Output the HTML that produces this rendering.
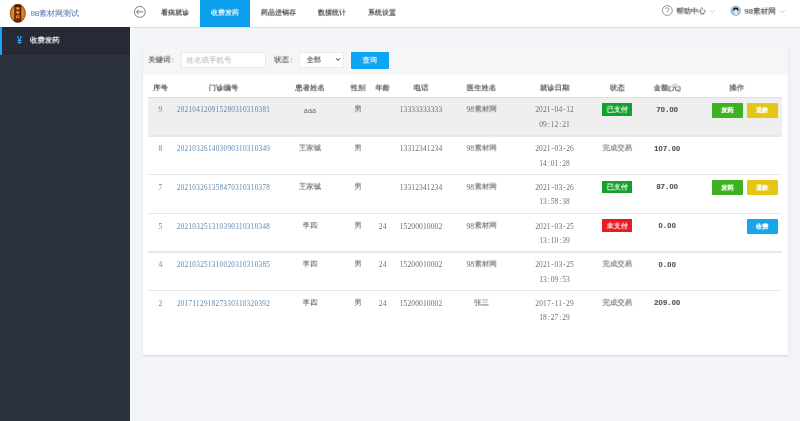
<!DOCTYPE html><html><head><meta charset="utf-8"><style>
*{margin:0;padding:0;box-sizing:border-box}
html,body{width:800px;height:421px;overflow:hidden;background:#f3f4f7;font-family:"Liberation Sans",sans-serif}
#root{position:absolute;left:0;top:0;width:800px;height:421px;will-change:transform;overflow:hidden}
.r{position:absolute}
.s{position:absolute}
.t{position:absolute;white-space:nowrap;will-change:transform;font-size:8px;line-height:11px}
.d{position:absolute;white-space:nowrap;line-height:10px}
.d i{font-style:normal;display:inline-block;text-align:center}
</style></head><body><div id="root">
<div class="r" style="left:0.00px;top:0.00px;width:800.00px;height:26.50px;background:#fff;box-shadow:0 0.8px 1px rgba(0,0,0,0.09)"></div>
<svg class="s" style="left:9px;top:3px" width="18" height="21" viewBox="0 0 18 21">
<defs><radialGradient id="lg" cx="50%" cy="50%" r="55%"><stop offset="0%" stop-color="#e8a838"/><stop offset="65%" stop-color="#d48a22"/><stop offset="100%" stop-color="#a8561a"/></radialGradient>
<clipPath id="lc"><ellipse cx="8.8" cy="10.3" rx="7.9" ry="9.3"/></clipPath></defs>
<ellipse cx="8.8" cy="10.3" rx="7.9" ry="9.3" fill="url(#lg)"/>
<g clip-path="url(#lc)">
<rect x="5.3" y="0" width="7" height="21" fill="#4a1608"/>
<rect x="6.2" y="3.6" width="5.2" height="14" fill="#8a2a10"/>
<path d="M7.2 4.6 h3.2 v1.1 h-1.1 v1.4 h-1 v-1.4 h-1.1z" fill="#f2b83a"/>
<path d="M7.1 8.6 q1.8 -0.9 3.4 0.2 q-0.4 1.9 -1.8 1.9 q-1.4 -0.2 -1.6 -2.1z" fill="#f2b83a"/>
<path d="M7.3 12.4 h3 v2.6 h-3z M8.1 13.1 v1.2 h1.4 v-1.2z" fill="#f2b83a" fill-rule="evenodd"/>
</g>
<ellipse cx="8.8" cy="10.3" rx="7.6" ry="9.0" fill="none" stroke="#a04a16" stroke-width="0.7" opacity="0.8"/>
</svg>
<div class="t" style="left:30px;top:8px;color:#5a80ab;-webkit-text-stroke-width:0.050px;transform:translate(0.400px,0.100px) scale(1.0000);transform-origin:0 0;">98素材网测试</div>
<svg class="s" style="left:133px;top:5px" width="14" height="14" viewBox="0 0 14 14">
<circle cx="6.8" cy="6.9" r="5.45" fill="none" stroke="#707070" stroke-width="0.9"/>
<path d="M3.5 6.9 L5.7 4.7 M3.5 6.9 L5.7 9.1 M3.8 6.9 H10.2" stroke="#707070" stroke-width="0.95" fill="none"/>
</svg>
<div class="t" style="left:175px;top:7px;color:#333;-webkit-text-stroke-width:0.171px;transform:translate(0.000px,0.787px) translateX(-50%) scale(0.8750);transform-origin:50% 0;">看病就诊</div>
<div class="r" style="left:200.00px;top:0.00px;width:50.00px;height:26.50px;background:#0b9feb;"></div>
<div class="t" style="left:225px;top:7px;color:#fff;-webkit-text-stroke-width:0.171px;transform:translate(0.000px,0.787px) translateX(-50%) scale(0.8750);transform-origin:50% 0;">收费发药</div>
<div class="t" style="left:278px;top:7px;color:#333;-webkit-text-stroke-width:0.171px;transform:translate(0.500px,0.787px) translateX(-50%) scale(0.8750);transform-origin:50% 0;">药品进销存</div>
<div class="t" style="left:332px;top:7px;color:#333;-webkit-text-stroke-width:0.171px;transform:translate(0.000px,0.787px) translateX(-50%) scale(0.8750);transform-origin:50% 0;">数据统计</div>
<div class="t" style="left:382px;top:7px;color:#333;-webkit-text-stroke-width:0.171px;transform:translate(0.000px,0.787px) translateX(-50%) scale(0.8750);transform-origin:50% 0;">系统设置</div>
<svg class="s" style="left:661px;top:5px" width="12" height="12" viewBox="0 0 12 12">
<circle cx="6.3" cy="5.55" r="4.95" fill="none" stroke="#7a7a7a" stroke-width="0.8"/>
<path d="M4.2 4.0 Q5.2 2.6 6.6 2.9 Q8.1 3.3 7.8 4.6 L5.7 7.6" stroke="#7a7a7a" stroke-width="0.85" fill="none"/>
</svg>
<div class="t" style="left:676px;top:6px;color:#484848;-webkit-text-stroke-width:0.130px;transform:translate(0.200px,0.012px) scale(0.9250);transform-origin:0 0;">帮助中心</div>
<svg class="s" style="left:709px;top:8.5px" width="7" height="5" viewBox="0 0 7 5"><path d="M0.8 1 L3.4 3.6 L6 1" stroke="#bbb" stroke-width="0.7" fill="none"/></svg>
<svg class="s" style="left:729.5px;top:4.8px" width="11.5" height="11.5" viewBox="0 0 12 12">
<defs><clipPath id="av"><circle cx="6" cy="6" r="5.5"/></clipPath><linearGradient id="avg" x1="0" x2="1" y1="0" y2="0"><stop offset="0" stop-color="#8fc4e6"/><stop offset="1" stop-color="#b2c2cf"/></linearGradient></defs>
<g clip-path="url(#av)"><rect width="12" height="12" fill="url(#avg)"/>
<ellipse cx="6.1" cy="4.6" rx="2.7" ry="1.9" fill="#1c232c"/>
<ellipse cx="6.1" cy="7.6" rx="1.9" ry="3.1" fill="#ede6e6"/>
<rect x="5.2" y="9.8" width="1.8" height="2.4" fill="#e2b4ac"/>
<path d="M3.6 4.8 Q6.1 3.3 8.6 4.8 L8.4 3.6 Q6.1 2.2 3.8 3.6 Z" fill="#1c232c"/>
</g></svg>
<div class="t" style="left:744px;top:6px;color:#484848;-webkit-text-stroke-width:0.126px;transform:translate(0.400px,0.075px) scale(0.9500);transform-origin:0 0;">98素材网</div>
<svg class="s" style="left:778.5px;top:8.5px" width="7" height="5" viewBox="0 0 7 5"><path d="M0.8 1 L3.4 3.6 L6 1" stroke="#bbb" stroke-width="0.7" fill="none"/></svg>
<div class="r" style="left:0.00px;top:26.50px;width:130.00px;height:395.00px;background:#2c323d;"></div>
<div class="r" style="left:0.00px;top:27.00px;width:130.00px;height:28.00px;background:#252a34;"></div>
<div class="r" style="left:0.00px;top:27.00px;width:2.00px;height:28.00px;background:#1ba4f6;"></div>
<div class="d" style="left:17.2px;top:34.7px;font-size:10.5px;line-height:10px;color:#2fa4f2;font-weight:bold;transform:scaleX(0.85);transform-origin:0 0">¥</div>
<div class="t" style="left:30px;top:35px;color:#f6f6f6;-webkit-text-stroke-width:0.216px;transform:translate(0.000px,0.113px) scale(0.9250);transform-origin:0 0;">收费发药</div>
<div class="r" style="left:130.00px;top:26.50px;width:3.00px;height:395.00px;background:#f3f7fc;"></div>
<div class="r" style="left:142.50px;top:45.50px;width:645.50px;height:309.30px;background:#fff;box-shadow:0 0.7px 1.8px rgba(0,0,0,0.14)"></div>
<div class="r" style="left:142.50px;top:46.00px;width:645.50px;height:28.50px;background:#f5f6f8;"></div>
<div class="t" style="left:148px;top:54px;color:#555;-webkit-text-stroke-width:0.128px;transform:translate(0.000px,0.644px) scale(0.9375);transform-origin:0 0;">关键词<span style="margin-left:1.3px">:</span></div>
<div class="r" style="left:180.50px;top:52.00px;width:85.50px;height:16.20px;background:#fff;border:1px solid #e8eaee;border-radius:1px"></div>
<div class="t" style="left:186px;top:55px;color:#b8b8b8;-webkit-text-stroke-width:0.043px;transform:translate(0.500px,0.044px) scale(0.9375);transform-origin:0 0;">姓名或手机号</div>
<div class="t" style="left:274px;top:54px;color:#555;-webkit-text-stroke-width:0.128px;transform:translate(0.000px,0.644px) scale(0.9375);transform-origin:0 0;">状态<span style="margin-left:1.3px">:</span></div>
<div class="r" style="left:299.20px;top:52.00px;width:44.80px;height:16.20px;background:#fff;border:1px solid #e8eaee;border-radius:1px"></div>
<div class="t" style="left:306px;top:54px;color:#4a4a4a;-webkit-text-stroke-width:0.111px;transform:translate(0.600px,0.850px) scale(0.9000);transform-origin:0 0;">全部</div>
<svg class="s" style="left:334.5px;top:57px" width="6" height="5" viewBox="0 0 6 5"><path d="M0.9 1.3 L3 3.3 L5.1 1.3" stroke="#333" stroke-width="1" fill="none"/></svg>
<div class="r" style="left:351.00px;top:52.00px;width:37.50px;height:16.50px;background:#0ea5f2;border-radius:1px"></div>
<div class="t" style="left:369px;top:55px;color:#fff;-webkit-text-stroke-width:0.111px;transform:translate(0.700px,0.250px) translateX(-50%) scale(0.9000);transform-origin:50% 0;">查询</div>
<div class="t" style="left:160px;top:82px;color:#444;-webkit-text-stroke-width:0.162px;transform:translate(0.500px,0.812px) translateX(-50%) scale(0.9250);transform-origin:50% 0;">序号</div>
<div class="t" style="left:223px;top:82px;color:#444;-webkit-text-stroke-width:0.162px;transform:translate(0.500px,0.812px) translateX(-50%) scale(0.9250);transform-origin:50% 0;">门诊编号</div>
<div class="t" style="left:310px;top:82px;color:#444;-webkit-text-stroke-width:0.162px;transform:translate(0.000px,0.812px) translateX(-50%) scale(0.9250);transform-origin:50% 0;">患者姓名</div>
<div class="t" style="left:358px;top:82px;color:#444;-webkit-text-stroke-width:0.162px;transform:translate(0.000px,0.812px) translateX(-50%) scale(0.9250);transform-origin:50% 0;">性别</div>
<div class="t" style="left:382px;top:82px;color:#444;-webkit-text-stroke-width:0.162px;transform:translate(0.700px,0.812px) translateX(-50%) scale(0.9250);transform-origin:50% 0;">年龄</div>
<div class="t" style="left:421px;top:82px;color:#444;-webkit-text-stroke-width:0.162px;transform:translate(0.000px,0.812px) translateX(-50%) scale(0.9250);transform-origin:50% 0;">电话</div>
<div class="t" style="left:481px;top:82px;color:#444;-webkit-text-stroke-width:0.162px;transform:translate(0.500px,0.812px) translateX(-50%) scale(0.9250);transform-origin:50% 0;">医生姓名</div>
<div class="t" style="left:554px;top:82px;color:#444;-webkit-text-stroke-width:0.162px;transform:translate(0.600px,0.812px) translateX(-50%) scale(0.9250);transform-origin:50% 0;">就诊日期</div>
<div class="t" style="left:617px;top:82px;color:#444;-webkit-text-stroke-width:0.162px;transform:translate(0.300px,0.812px) translateX(-50%) scale(0.9250);transform-origin:50% 0;">状态</div>
<div class="t" style="left:667px;top:82px;color:#444;-webkit-text-stroke-width:0.162px;transform:translate(0.200px,0.812px) translateX(-50%) scale(0.9250);transform-origin:50% 0;">金额(元)</div>
<div class="t" style="left:736px;top:82px;color:#444;-webkit-text-stroke-width:0.162px;transform:translate(0.700px,0.812px) translateX(-50%) scale(0.9250);transform-origin:50% 0;">操作</div>
<div class="r" style="left:147.50px;top:96.50px;width:634.50px;height:1.40px;background:#e0e0e0;"></div>
<div class="r" style="left:147.50px;top:97.90px;width:634.50px;height:37.60px;background:#efefef;"></div>
<div class="d" style="left:160.50px;top:105.25px;font-family:'Liberation Serif',serif;font-size:7.5px;color:#808080;transform:translateX(-50%);letter-spacing:0.125px;">9</div>
<div class="d" style="left:223.50px;top:105.25px;font-family:'Liberation Serif',serif;font-size:7.2px;color:#5a88b0;transform:translateX(-50%);letter-spacing:0.3px;">202104120915280310310381</div>
<div class="d" style="left:310.00px;top:105.70px;font-family:'Liberation Sans',sans-serif;font-size:7.3px;color:#6a6a6a;transform:translateX(-50%);letter-spacing:0.125px;">aaa</div>
<div class="t" style="left:358px;top:103px;color:#626262;-webkit-text-stroke-width:0.065px;transform:translate(0.000px,0.912px) translateX(-50%) scale(0.9250);transform-origin:50% 0;">男</div>
<div class="d" style="left:421.00px;top:105.25px;font-family:'Liberation Serif',serif;font-size:7.5px;color:#6e6e6e;transform:translateX(-50%);letter-spacing:0.125px;">13333333333</div>
<div class="t" style="left:485px;top:103px;color:#626262;-webkit-text-stroke-width:0.065px;transform:translate(0.600px,0.912px) translateX(-50%) scale(0.9250);transform-origin:50% 0;">素材网</div>
<div class="d" style="left:470.30px;top:105.25px;font-family:'Liberation Serif',serif;font-size:7.5px;color:#666;transform:translateX(-50%);letter-spacing:0.125px;">98</div>
<div class="d" style="left:554.60px;top:105.25px;font-family:'Liberation Serif',serif;font-size:7.5px;color:#6e6e6e;transform:translateX(-50%);letter-spacing:0.125px;">2021<i style="width:3.875px">-</i>04<i style="width:3.875px">-</i>12</div>
<div class="d" style="left:554.60px;top:119.85px;font-family:'Liberation Serif',serif;font-size:7.5px;color:#6e6e6e;transform:translateX(-50%);letter-spacing:0.125px;">09<i style="width:3.78px">:</i>12<i style="width:3.78px">:</i>21</div>
<div class="r" style="left:602.30px;top:103.00px;width:30.00px;height:12.60px;background:#14a12b;"></div>
<div class="t" style="left:617px;top:104px;color:#fff;-webkit-text-stroke-width:0.169px;transform:translate(0.300px,0.719px) translateX(-50%) scale(0.8875);transform-origin:50% 0;">已支付</div>
<div class="d" style="left:667.20px;top:104.80px;font-family:'Liberation Sans',sans-serif;font-size:7.4px;color:#505050;transform:translateX(-50%);font-weight:bold;-webkit-text-stroke:0.15px #505050;"><i style="width:4.35px">7</i><i style="width:4.35px">0</i><i style="width:4.35px">.</i><i style="width:4.35px">0</i><i style="width:4.35px">0</i></div>
<div class="r" style="left:712.00px;top:102.80px;width:30.75px;height:14.90px;background:#3cb222;border-radius:1px"></div>
<div class="t" style="left:727px;top:105px;color:#fff;-webkit-text-stroke-width:0.452px;transform:translate(0.400px,0.938px) translateX(-50%) scale(0.7750);transform-origin:50% 0;">发药</div>
<div class="r" style="left:746.80px;top:102.80px;width:30.75px;height:14.90px;background:#e5c614;border-radius:1px"></div>
<div class="t" style="left:762px;top:105px;color:#fff;-webkit-text-stroke-width:0.452px;transform:translate(0.200px,0.938px) translateX(-50%) scale(0.7750);transform-origin:50% 0;">退款</div>
<div class="r" style="left:147.50px;top:135.45px;width:634.50px;height:1.30px;background:#e8e8e8;"></div>
<div class="d" style="left:160.50px;top:144.15px;font-family:'Liberation Serif',serif;font-size:7.5px;color:#808080;transform:translateX(-50%);letter-spacing:0.125px;">8</div>
<div class="d" style="left:223.50px;top:144.15px;font-family:'Liberation Serif',serif;font-size:7.2px;color:#5a88b0;transform:translateX(-50%);letter-spacing:0.3px;">202103261403090310310349</div>
<div class="t" style="left:310px;top:142px;color:#626262;-webkit-text-stroke-width:0.065px;transform:translate(0.000px,0.812px) translateX(-50%) scale(0.9250);transform-origin:50% 0;">王家铖</div>
<div class="t" style="left:358px;top:142px;color:#626262;-webkit-text-stroke-width:0.065px;transform:translate(0.000px,0.812px) translateX(-50%) scale(0.9250);transform-origin:50% 0;">男</div>
<div class="d" style="left:421.00px;top:144.15px;font-family:'Liberation Serif',serif;font-size:7.5px;color:#6e6e6e;transform:translateX(-50%);letter-spacing:0.125px;">13312341234</div>
<div class="t" style="left:485px;top:142px;color:#626262;-webkit-text-stroke-width:0.065px;transform:translate(0.600px,0.812px) translateX(-50%) scale(0.9250);transform-origin:50% 0;">素材网</div>
<div class="d" style="left:470.30px;top:144.15px;font-family:'Liberation Serif',serif;font-size:7.5px;color:#666;transform:translateX(-50%);letter-spacing:0.125px;">98</div>
<div class="d" style="left:554.60px;top:144.15px;font-family:'Liberation Serif',serif;font-size:7.5px;color:#6e6e6e;transform:translateX(-50%);letter-spacing:0.125px;">2021<i style="width:3.875px">-</i>03<i style="width:3.875px">-</i>26</div>
<div class="d" style="left:554.60px;top:158.75px;font-family:'Liberation Serif',serif;font-size:7.5px;color:#6e6e6e;transform:translateX(-50%);letter-spacing:0.125px;">14<i style="width:3.78px">:</i>01<i style="width:3.78px">:</i>28</div>
<div class="t" style="left:617px;top:142px;color:#6a6a6a;-webkit-text-stroke-width:0.108px;transform:translate(0.300px,0.812px) translateX(-50%) scale(0.9250);transform-origin:50% 0;">完成交易</div>
<div class="d" style="left:667.20px;top:143.70px;font-family:'Liberation Sans',sans-serif;font-size:7.4px;color:#505050;transform:translateX(-50%);font-weight:bold;-webkit-text-stroke:0.15px #505050;"><i style="width:4.35px">1</i><i style="width:4.35px">0</i><i style="width:4.35px">7</i><i style="width:4.35px">.</i><i style="width:4.35px">0</i><i style="width:4.35px">0</i></div>
<div class="r" style="left:147.50px;top:174.15px;width:634.50px;height:1.30px;background:#e8e8e8;"></div>
<div class="d" style="left:160.50px;top:182.85px;font-family:'Liberation Serif',serif;font-size:7.5px;color:#808080;transform:translateX(-50%);letter-spacing:0.125px;">7</div>
<div class="d" style="left:223.50px;top:182.85px;font-family:'Liberation Serif',serif;font-size:7.2px;color:#5a88b0;transform:translateX(-50%);letter-spacing:0.3px;">202103261358470310310378</div>
<div class="t" style="left:310px;top:181px;color:#626262;-webkit-text-stroke-width:0.065px;transform:translate(0.000px,0.513px) translateX(-50%) scale(0.9250);transform-origin:50% 0;">王家铖</div>
<div class="t" style="left:358px;top:181px;color:#626262;-webkit-text-stroke-width:0.065px;transform:translate(0.000px,0.513px) translateX(-50%) scale(0.9250);transform-origin:50% 0;">男</div>
<div class="d" style="left:421.00px;top:182.85px;font-family:'Liberation Serif',serif;font-size:7.5px;color:#6e6e6e;transform:translateX(-50%);letter-spacing:0.125px;">13312341234</div>
<div class="t" style="left:485px;top:181px;color:#626262;-webkit-text-stroke-width:0.065px;transform:translate(0.600px,0.513px) translateX(-50%) scale(0.9250);transform-origin:50% 0;">素材网</div>
<div class="d" style="left:470.30px;top:182.85px;font-family:'Liberation Serif',serif;font-size:7.5px;color:#666;transform:translateX(-50%);letter-spacing:0.125px;">98</div>
<div class="d" style="left:554.60px;top:182.85px;font-family:'Liberation Serif',serif;font-size:7.5px;color:#6e6e6e;transform:translateX(-50%);letter-spacing:0.125px;">2021<i style="width:3.875px">-</i>03<i style="width:3.875px">-</i>26</div>
<div class="d" style="left:554.60px;top:197.45px;font-family:'Liberation Serif',serif;font-size:7.5px;color:#6e6e6e;transform:translateX(-50%);letter-spacing:0.125px;">13<i style="width:3.78px">:</i>58<i style="width:3.78px">:</i>38</div>
<div class="r" style="left:602.30px;top:180.60px;width:30.00px;height:12.60px;background:#14a12b;"></div>
<div class="t" style="left:617px;top:182px;color:#fff;-webkit-text-stroke-width:0.169px;transform:translate(0.300px,0.319px) translateX(-50%) scale(0.8875);transform-origin:50% 0;">已支付</div>
<div class="d" style="left:667.20px;top:182.40px;font-family:'Liberation Sans',sans-serif;font-size:7.4px;color:#505050;transform:translateX(-50%);font-weight:bold;-webkit-text-stroke:0.15px #505050;"><i style="width:4.35px">8</i><i style="width:4.35px">7</i><i style="width:4.35px">.</i><i style="width:4.35px">0</i><i style="width:4.35px">0</i></div>
<div class="r" style="left:712.00px;top:180.40px;width:30.75px;height:14.90px;background:#3cb222;border-radius:1px"></div>
<div class="t" style="left:727px;top:183px;color:#fff;-webkit-text-stroke-width:0.452px;transform:translate(0.400px,0.538px) translateX(-50%) scale(0.7750);transform-origin:50% 0;">发药</div>
<div class="r" style="left:746.80px;top:180.40px;width:30.75px;height:14.90px;background:#e5c614;border-radius:1px"></div>
<div class="t" style="left:762px;top:183px;color:#fff;-webkit-text-stroke-width:0.452px;transform:translate(0.200px,0.538px) translateX(-50%) scale(0.7750);transform-origin:50% 0;">退款</div>
<div class="r" style="left:147.50px;top:212.95px;width:634.50px;height:1.30px;background:#e8e8e8;"></div>
<div class="d" style="left:160.50px;top:221.65px;font-family:'Liberation Serif',serif;font-size:7.5px;color:#808080;transform:translateX(-50%);letter-spacing:0.125px;">5</div>
<div class="d" style="left:223.50px;top:221.65px;font-family:'Liberation Serif',serif;font-size:7.2px;color:#5a88b0;transform:translateX(-50%);letter-spacing:0.3px;">202103251310390310310348</div>
<div class="t" style="left:310px;top:220px;color:#626262;-webkit-text-stroke-width:0.065px;transform:translate(0.000px,0.312px) translateX(-50%) scale(0.9250);transform-origin:50% 0;">李四</div>
<div class="t" style="left:358px;top:220px;color:#626262;-webkit-text-stroke-width:0.065px;transform:translate(0.000px,0.312px) translateX(-50%) scale(0.9250);transform-origin:50% 0;">男</div>
<div class="d" style="left:382.70px;top:221.65px;font-family:'Liberation Serif',serif;font-size:7.5px;color:#6e6e6e;transform:translateX(-50%);letter-spacing:0.125px;">24</div>
<div class="d" style="left:421.00px;top:221.65px;font-family:'Liberation Serif',serif;font-size:7.5px;color:#6e6e6e;transform:translateX(-50%);letter-spacing:0.125px;">15200010002</div>
<div class="t" style="left:485px;top:220px;color:#626262;-webkit-text-stroke-width:0.065px;transform:translate(0.600px,0.312px) translateX(-50%) scale(0.9250);transform-origin:50% 0;">素材网</div>
<div class="d" style="left:470.30px;top:221.65px;font-family:'Liberation Serif',serif;font-size:7.5px;color:#666;transform:translateX(-50%);letter-spacing:0.125px;">98</div>
<div class="d" style="left:554.60px;top:221.65px;font-family:'Liberation Serif',serif;font-size:7.5px;color:#6e6e6e;transform:translateX(-50%);letter-spacing:0.125px;">2021<i style="width:3.875px">-</i>03<i style="width:3.875px">-</i>25</div>
<div class="d" style="left:554.60px;top:236.25px;font-family:'Liberation Serif',serif;font-size:7.5px;color:#6e6e6e;transform:translateX(-50%);letter-spacing:0.125px;">13<i style="width:3.78px">:</i>10<i style="width:3.78px">:</i>39</div>
<div class="r" style="left:602.30px;top:219.40px;width:30.00px;height:12.60px;background:#ec1a21;"></div>
<div class="t" style="left:617px;top:221px;color:#fff;-webkit-text-stroke-width:0.169px;transform:translate(0.300px,0.119px) translateX(-50%) scale(0.8875);transform-origin:50% 0;">未支付</div>
<div class="d" style="left:667.20px;top:221.20px;font-family:'Liberation Sans',sans-serif;font-size:7.4px;color:#505050;transform:translateX(-50%);font-weight:bold;-webkit-text-stroke:0.15px #505050;"><i style="width:4.35px">0</i><i style="width:4.35px">.</i><i style="width:4.35px">0</i><i style="width:4.35px">0</i></div>
<div class="r" style="left:746.80px;top:219.20px;width:30.75px;height:14.90px;background:#17a6ea;border-radius:1px"></div>
<div class="t" style="left:762px;top:222px;color:#fff;-webkit-text-stroke-width:0.452px;transform:translate(0.200px,0.338px) translateX(-50%) scale(0.7750);transform-origin:50% 0;">收费</div>
<div class="r" style="left:147.50px;top:251.45px;width:634.50px;height:1.30px;background:#e8e8e8;"></div>
<div class="d" style="left:160.50px;top:260.15px;font-family:'Liberation Serif',serif;font-size:7.5px;color:#808080;transform:translateX(-50%);letter-spacing:0.125px;">4</div>
<div class="d" style="left:223.50px;top:260.15px;font-family:'Liberation Serif',serif;font-size:7.2px;color:#5a88b0;transform:translateX(-50%);letter-spacing:0.3px;">202103251310020310310385</div>
<div class="t" style="left:310px;top:258px;color:#626262;-webkit-text-stroke-width:0.065px;transform:translate(0.000px,0.812px) translateX(-50%) scale(0.9250);transform-origin:50% 0;">李四</div>
<div class="t" style="left:358px;top:258px;color:#626262;-webkit-text-stroke-width:0.065px;transform:translate(0.000px,0.812px) translateX(-50%) scale(0.9250);transform-origin:50% 0;">男</div>
<div class="d" style="left:382.70px;top:260.15px;font-family:'Liberation Serif',serif;font-size:7.5px;color:#6e6e6e;transform:translateX(-50%);letter-spacing:0.125px;">24</div>
<div class="d" style="left:421.00px;top:260.15px;font-family:'Liberation Serif',serif;font-size:7.5px;color:#6e6e6e;transform:translateX(-50%);letter-spacing:0.125px;">15200010002</div>
<div class="t" style="left:485px;top:258px;color:#626262;-webkit-text-stroke-width:0.065px;transform:translate(0.600px,0.812px) translateX(-50%) scale(0.9250);transform-origin:50% 0;">素材网</div>
<div class="d" style="left:470.30px;top:260.15px;font-family:'Liberation Serif',serif;font-size:7.5px;color:#666;transform:translateX(-50%);letter-spacing:0.125px;">98</div>
<div class="d" style="left:554.60px;top:260.15px;font-family:'Liberation Serif',serif;font-size:7.5px;color:#6e6e6e;transform:translateX(-50%);letter-spacing:0.125px;">2021<i style="width:3.875px">-</i>03<i style="width:3.875px">-</i>25</div>
<div class="d" style="left:554.60px;top:274.75px;font-family:'Liberation Serif',serif;font-size:7.5px;color:#6e6e6e;transform:translateX(-50%);letter-spacing:0.125px;">13<i style="width:3.78px">:</i>09<i style="width:3.78px">:</i>53</div>
<div class="t" style="left:617px;top:258px;color:#6a6a6a;-webkit-text-stroke-width:0.108px;transform:translate(0.300px,0.812px) translateX(-50%) scale(0.9250);transform-origin:50% 0;">完成交易</div>
<div class="d" style="left:667.20px;top:259.70px;font-family:'Liberation Sans',sans-serif;font-size:7.4px;color:#505050;transform:translateX(-50%);font-weight:bold;-webkit-text-stroke:0.15px #505050;"><i style="width:4.35px">0</i><i style="width:4.35px">.</i><i style="width:4.35px">0</i><i style="width:4.35px">0</i></div>
<div class="r" style="left:147.50px;top:290.15px;width:634.50px;height:1.30px;background:#e8e8e8;"></div>
<div class="d" style="left:160.50px;top:298.85px;font-family:'Liberation Serif',serif;font-size:7.5px;color:#808080;transform:translateX(-50%);letter-spacing:0.125px;">2</div>
<div class="d" style="left:223.50px;top:298.85px;font-family:'Liberation Serif',serif;font-size:7.2px;color:#5a88b0;transform:translateX(-50%);letter-spacing:0.3px;">201711291827330310320392</div>
<div class="t" style="left:310px;top:297px;color:#626262;-webkit-text-stroke-width:0.065px;transform:translate(0.000px,0.513px) translateX(-50%) scale(0.9250);transform-origin:50% 0;">李四</div>
<div class="t" style="left:358px;top:297px;color:#626262;-webkit-text-stroke-width:0.065px;transform:translate(0.000px,0.513px) translateX(-50%) scale(0.9250);transform-origin:50% 0;">男</div>
<div class="d" style="left:382.70px;top:298.85px;font-family:'Liberation Serif',serif;font-size:7.5px;color:#6e6e6e;transform:translateX(-50%);letter-spacing:0.125px;">24</div>
<div class="d" style="left:421.00px;top:298.85px;font-family:'Liberation Serif',serif;font-size:7.5px;color:#6e6e6e;transform:translateX(-50%);letter-spacing:0.125px;">15200010002</div>
<div class="t" style="left:481px;top:297px;color:#626262;-webkit-text-stroke-width:0.065px;transform:translate(0.500px,0.513px) translateX(-50%) scale(0.9250);transform-origin:50% 0;">张三</div>
<div class="d" style="left:554.60px;top:298.85px;font-family:'Liberation Serif',serif;font-size:7.5px;color:#6e6e6e;transform:translateX(-50%);letter-spacing:0.125px;">2017<i style="width:3.875px">-</i>11<i style="width:3.875px">-</i>29</div>
<div class="d" style="left:554.60px;top:313.45px;font-family:'Liberation Serif',serif;font-size:7.5px;color:#6e6e6e;transform:translateX(-50%);letter-spacing:0.125px;">18<i style="width:3.78px">:</i>27<i style="width:3.78px">:</i>29</div>
<div class="t" style="left:617px;top:297px;color:#6a6a6a;-webkit-text-stroke-width:0.108px;transform:translate(0.300px,0.513px) translateX(-50%) scale(0.9250);transform-origin:50% 0;">完成交易</div>
<div class="d" style="left:667.20px;top:298.40px;font-family:'Liberation Sans',sans-serif;font-size:7.4px;color:#505050;transform:translateX(-50%);font-weight:bold;-webkit-text-stroke:0.15px #505050;"><i style="width:4.35px">2</i><i style="width:4.35px">0</i><i style="width:4.35px">9</i><i style="width:4.35px">.</i><i style="width:4.35px">0</i><i style="width:4.35px">0</i></div>
</div></body></html>
